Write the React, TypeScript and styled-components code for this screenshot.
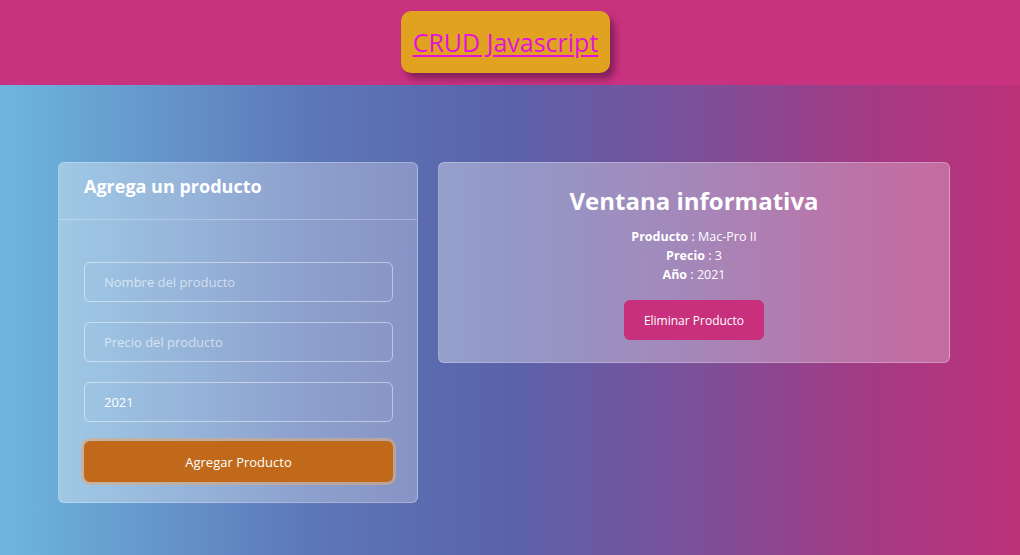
import styled, { createGlobalStyle } from "styled-components";

const GlobalStyle = createGlobalStyle`
  * {
    box-sizing: border-box;
  }
  body {
    margin: 0;
    font-family: "Open Sans", "Noto Sans", sans-serif;
  }
`;

export default function App() {
  return (
    <>
      <GlobalStyle />
      <StyledPage>
        <StyledHeader>
          <StyledBrand>
            <StyledBrandLink href="#">CRUD Javascript</StyledBrandLink>
          </StyledBrand>
        </StyledHeader>
        <StyledMain>
          <StyledCard $width={360}>
            <StyledCardHeader>Agrega un producto</StyledCardHeader>
            <StyledForm>
              <StyledInput placeholder="Nombre del producto" />
              <StyledInput placeholder="Precio del producto" />
              <StyledInput defaultValue="2021" />
              <StyledSubmit>Agregar Producto</StyledSubmit>
            </StyledForm>
          </StyledCard>
          <StyledCard $width={512}>
            <StyledInfoBody>
              <StyledInfoTitle>Ventana informativa</StyledInfoTitle>
              <StyledInfoLine>
                <strong>Producto</strong> : Mac-Pro II
              </StyledInfoLine>
              <StyledInfoLine>
                <strong>Precio</strong> : 3
              </StyledInfoLine>
              <StyledInfoLine>
                <strong>Año</strong> : 2021
              </StyledInfoLine>
              <StyledDeleteButton>Eliminar Producto</StyledDeleteButton>
            </StyledInfoBody>
          </StyledCard>
        </StyledMain>
      </StyledPage>
    </>
  );
}

const StyledPage = styled.div`
  min-height: 100vh;
  display: flex;
  flex-direction: column;
  background: linear-gradient(90deg, #6db6df 0%, #5d78b8 30%, #5a62aa 50%, #7c509a 68%, #a33a84 85%, #bb327a 100%);
`;

const StyledHeader = styled.header`
  height: 85px;
  background-color: #c8327f;
  display: flex;
  justify-content: center;
  align-items: flex-start;
  padding: 11px 9px 0 0;
`;

const StyledBrand = styled.div`
  background-color: #e2a221;
  border-radius: 10px;
  height: 62px;
  padding: 0 12px;
  display: flex;
  align-items: center;
  box-shadow: 5px 6px 6px rgba(90, 20, 70, 0.6);
`;

const StyledBrandLink = styled.a`
  font-size: 25px;
  color: #e012dc;
  text-decoration: underline;
  text-underline-offset: 3px;
`;

const StyledMain = styled.main`
  flex: 1;
  display: flex;
  align-items: flex-start;
  gap: 20px;
  padding: 77px 0 0 58px;
`;

const StyledCard = styled.section<{ $width: number }>`
  width: ${(p) => p.$width}px;
  background: linear-gradient(90deg, rgba(255, 255, 255, 0.36), rgba(255, 255, 255, 0.27));
  border: 1px solid rgba(255, 255, 255, 0.25);
  border-radius: 6px;
  color: #fff;
`;

const StyledCardHeader = styled.h2`
  margin: 0;
  height: 57px;
  padding: 11px 25px 0;
  font-size: 18px;
  font-weight: 700;
  border-bottom: 1px solid rgba(255, 255, 255, 0.28);
`;

const StyledForm = styled.div`
  display: flex;
  flex-direction: column;
  gap: 20px;
  padding: 42px 25px 20px;
`;

const StyledInput = styled.input`
  height: 40px;
  width: 309px;
  border-radius: 6px;
  border: 1px solid rgba(255, 255, 255, 0.45);
  background: transparent;
  padding: 0 19px;
  font-family: "Open Sans", "Noto Sans", sans-serif;
  font-size: 13px;
  color: #fff;
  outline: none;

  &::placeholder {
    color: rgba(255, 255, 255, 0.6);
  }
`;

const StyledSubmit = styled.button`
  height: 41px;
  width: 309px;
  margin-top: -1px;
  border: none;
  border-radius: 6px;
  background-color: #c0691a;
  box-shadow: 0 0 0 3px rgba(215, 170, 130, 0.65);
  color: #fff;
  font-family: "Open Sans", "Noto Sans", sans-serif;
  font-size: 13px;
  cursor: pointer;
`;

const StyledInfoBody = styled.div`
  display: flex;
  flex-direction: column;
  align-items: center;
  padding: 21px 20px 22px;
`;

const StyledInfoTitle = styled.h1`
  margin: 0 0 10px;
  font-size: 24px;
  font-weight: 700;
`;

const StyledInfoLine = styled.div`
  font-size: 12.5px;
  line-height: 19px;
`;

const StyledDeleteButton = styled.button`
  margin-top: 16px;
  height: 40px;
  padding: 0 20px;
  border: none;
  border-radius: 6px;
  background-color: #c8307d;
  color: #fff;
  font-family: "Open Sans", "Noto Sans", sans-serif;
  font-size: 12px;
  cursor: pointer;
`;
